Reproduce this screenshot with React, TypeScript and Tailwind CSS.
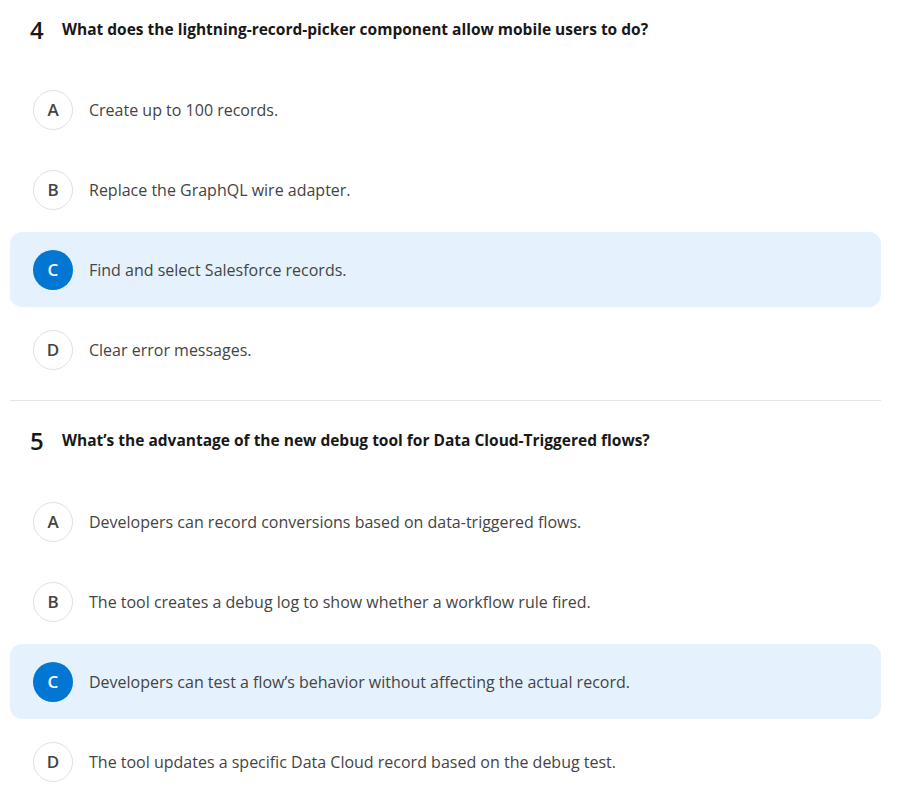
const questions = [
  {
    num: 4,
    text: 'What does the lightning-record-picker component allow mobile users to do?',
    answer: 'C',
    options: [
      { key: 'A', label: 'Create up to 100 records.' },
      { key: 'B', label: 'Replace the GraphQL wire adapter.' },
      { key: 'C', label: 'Find and select Salesforce records.' },
      { key: 'D', label: 'Clear error messages.' },
    ],
  },
  {
    num: 5,
    text: 'What\u2019s the advantage of the new debug tool for Data Cloud-Triggered flows?',
    answer: 'C',
    options: [
      { key: 'A', label: 'Developers can record conversions based on data-triggered flows.' },
      { key: 'B', label: 'The tool creates a debug log to show whether a workflow rule fired.' },
      { key: 'C', label: 'Developers can test a flow\u2019s behavior without affecting the actual record.' },
      { key: 'D', label: 'The tool updates a specific Data Cloud record based on the debug test.' },
    ],
  },
];

function Option({ k, label, selected }: { k: string; label: string; selected: boolean }) {
  return (
    <div
      className={
        'flex h-[75px] items-center rounded-xl pl-[23px] ' + (selected ? 'bg-[#e5f2fd]' : '')
      }
    >
      <div
        className={
          'flex h-10 w-10 shrink-0 items-center justify-center rounded-full text-[17px] font-semibold ' +
          (selected ? 'bg-[#0176d3] text-white' : 'border border-[#e0e0e0] bg-white text-[#444]')
        }
      >
        {k}
      </div>
      <div className="ml-4 text-[16px] text-[#444]">{label}</div>
    </div>
  );
}

export default function App() {
  return (
    <div className="w-[901px] bg-white pl-[10px] pr-[20px] font-['Open_Sans',sans-serif]">
      {questions.map((q, i) => (
        <div key={q.num} className={i > 0 ? 'border-t border-[#e5e5e5]' : ''}>
          <div className={'flex items-center pl-5 ' + (i > 0 ? 'pt-[26px]' : 'pt-[16px]')}>
            <span className="w-[32px] text-[24px] font-semibold leading-[28px] text-[#181818]">{q.num}</span>
            <span className="text-[15.5px] font-bold text-[#181818]">{q.text}</span>
          </div>
          <div className={'flex flex-col gap-[5px] pb-[13px] ' + (i > 0 ? 'mt-[29px]' : 'mt-[28px]')}>
            {q.options.map((o) => (
              <Option key={o.key} k={o.key} label={o.label} selected={o.key === q.answer} />
            ))}
          </div>
        </div>
      ))}
    </div>
  );
}
